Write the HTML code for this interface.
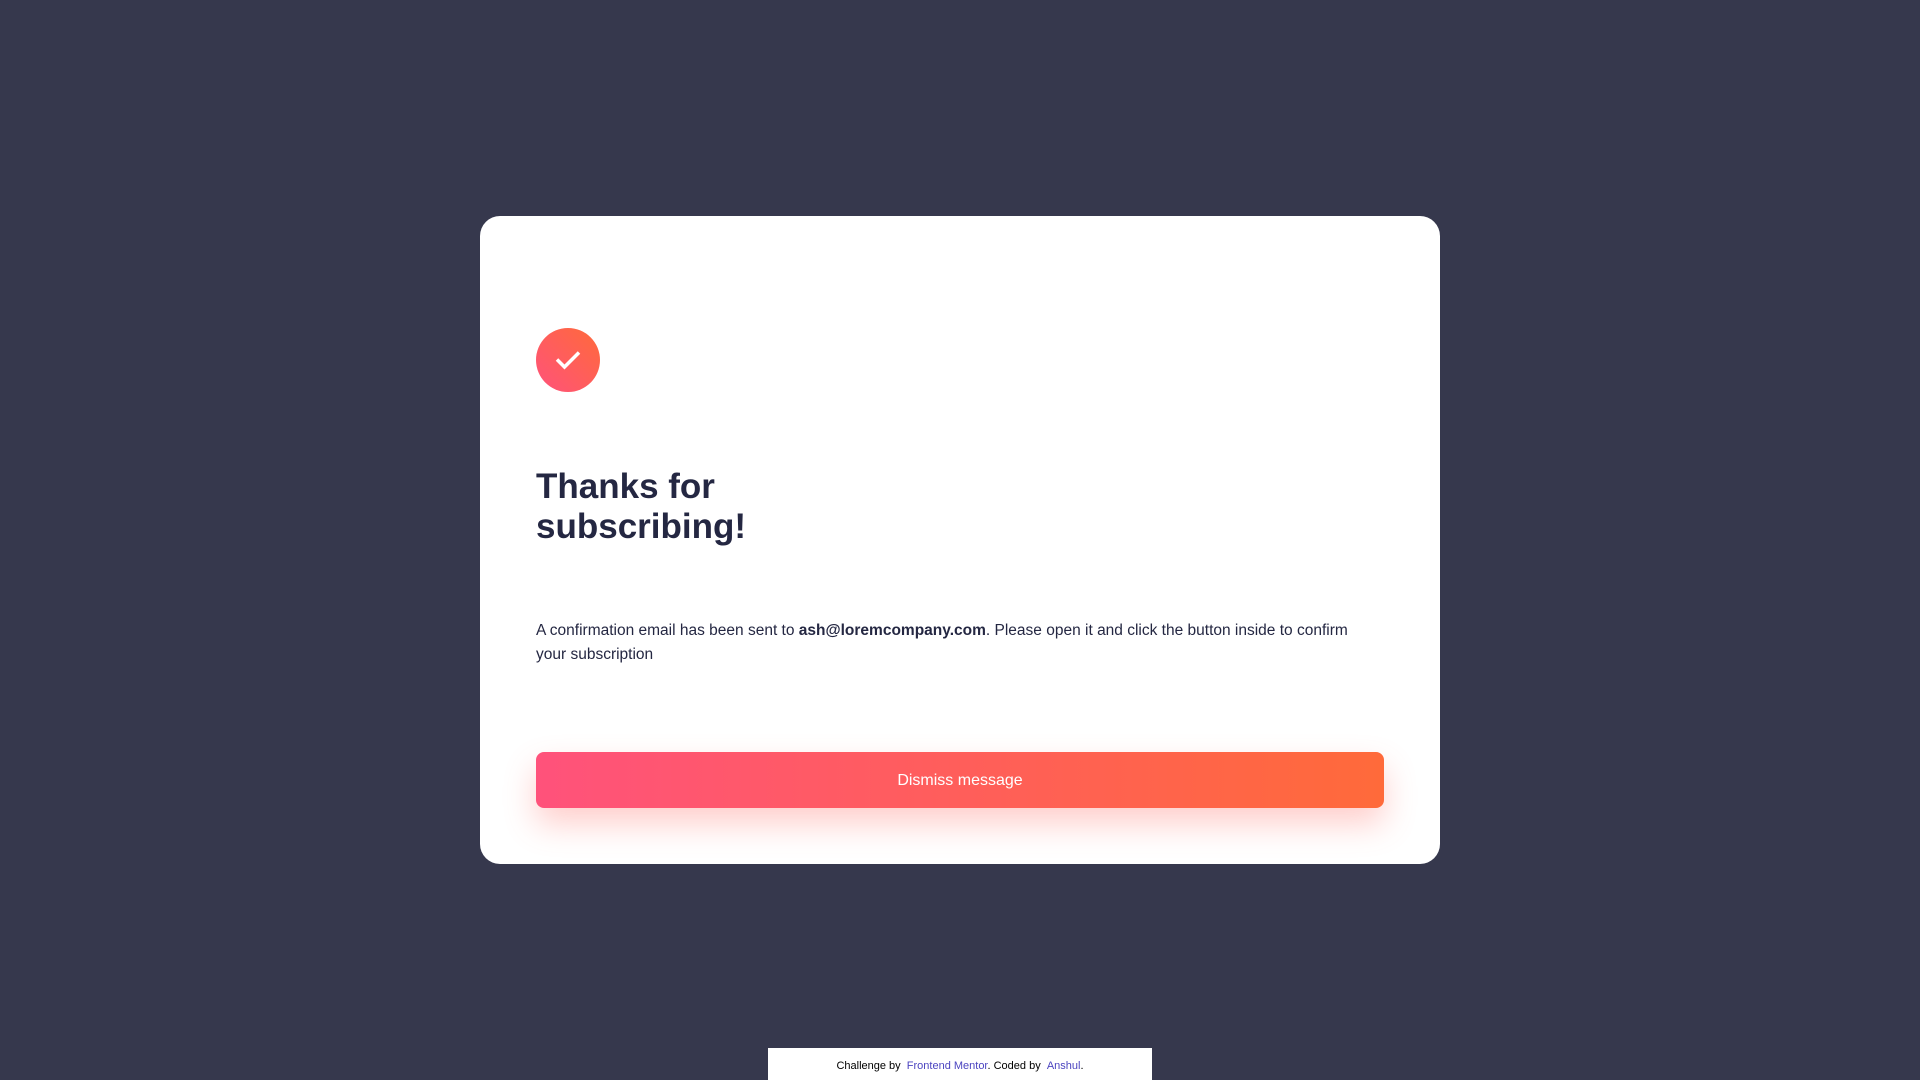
<!DOCTYPE html>
<html><head><meta charset="utf-8"><style>
*{margin:0;padding:0;box-sizing:border-box}
html,body{width:1920px;height:1080px;overflow:hidden}
body{background:#36384d;font-family:"Liberation Sans",sans-serif;position:relative}
.card{position:absolute;left:480px;top:216px;width:960px;height:648px;background:#fff;border-radius:20px}
.icon{position:absolute;left:56px;top:112px;width:64px;height:64px;border-radius:50%;background:linear-gradient(225deg,#ff6a3a,#ff527b)}
h1{position:absolute;left:56px;top:251px;font-size:35px;line-height:40px;color:#242742;font-weight:bold;width:300px}
p{position:absolute;left:56px;top:403px;width:842px;font-size:15.5px;line-height:24px;color:#242742}
.btn{position:absolute;left:56px;top:536px;width:848px;height:56px;border-radius:8px;background:linear-gradient(90deg,#ff527b,#ff6a3a);color:#fff;font-size:16px;text-align:center;line-height:58px;box-shadow:0 16px 32px rgba(255,97,85,.3)}
.foot{position:absolute;left:768px;top:1048px;width:384px;height:32px;background:#fff;font-size:11px;text-align:center;line-height:36px;color:#000}
.foot span{color:#4b44c0}
</style></head><body>
<div class="card">
<div class="icon"><svg width="64" height="64" viewBox="0 0 64 64"><path d="M21 31.5l7.5 7.5 14.5-14.5" fill="none" stroke="#fff" stroke-width="3.5"/></svg></div>
<h1>Thanks for subscribing!</h1>
<p>A confirmation email has been sent to <b>ash@loremcompany.com</b>. Please open it and click the button inside to confirm your subscription</p>
<div class="btn">Dismiss message</div>
</div>
<div class="foot">Challenge by &nbsp;<span>Frontend Mentor</span>. Coded by &nbsp;<span>Anshul</span>.</div>
</body></html>
